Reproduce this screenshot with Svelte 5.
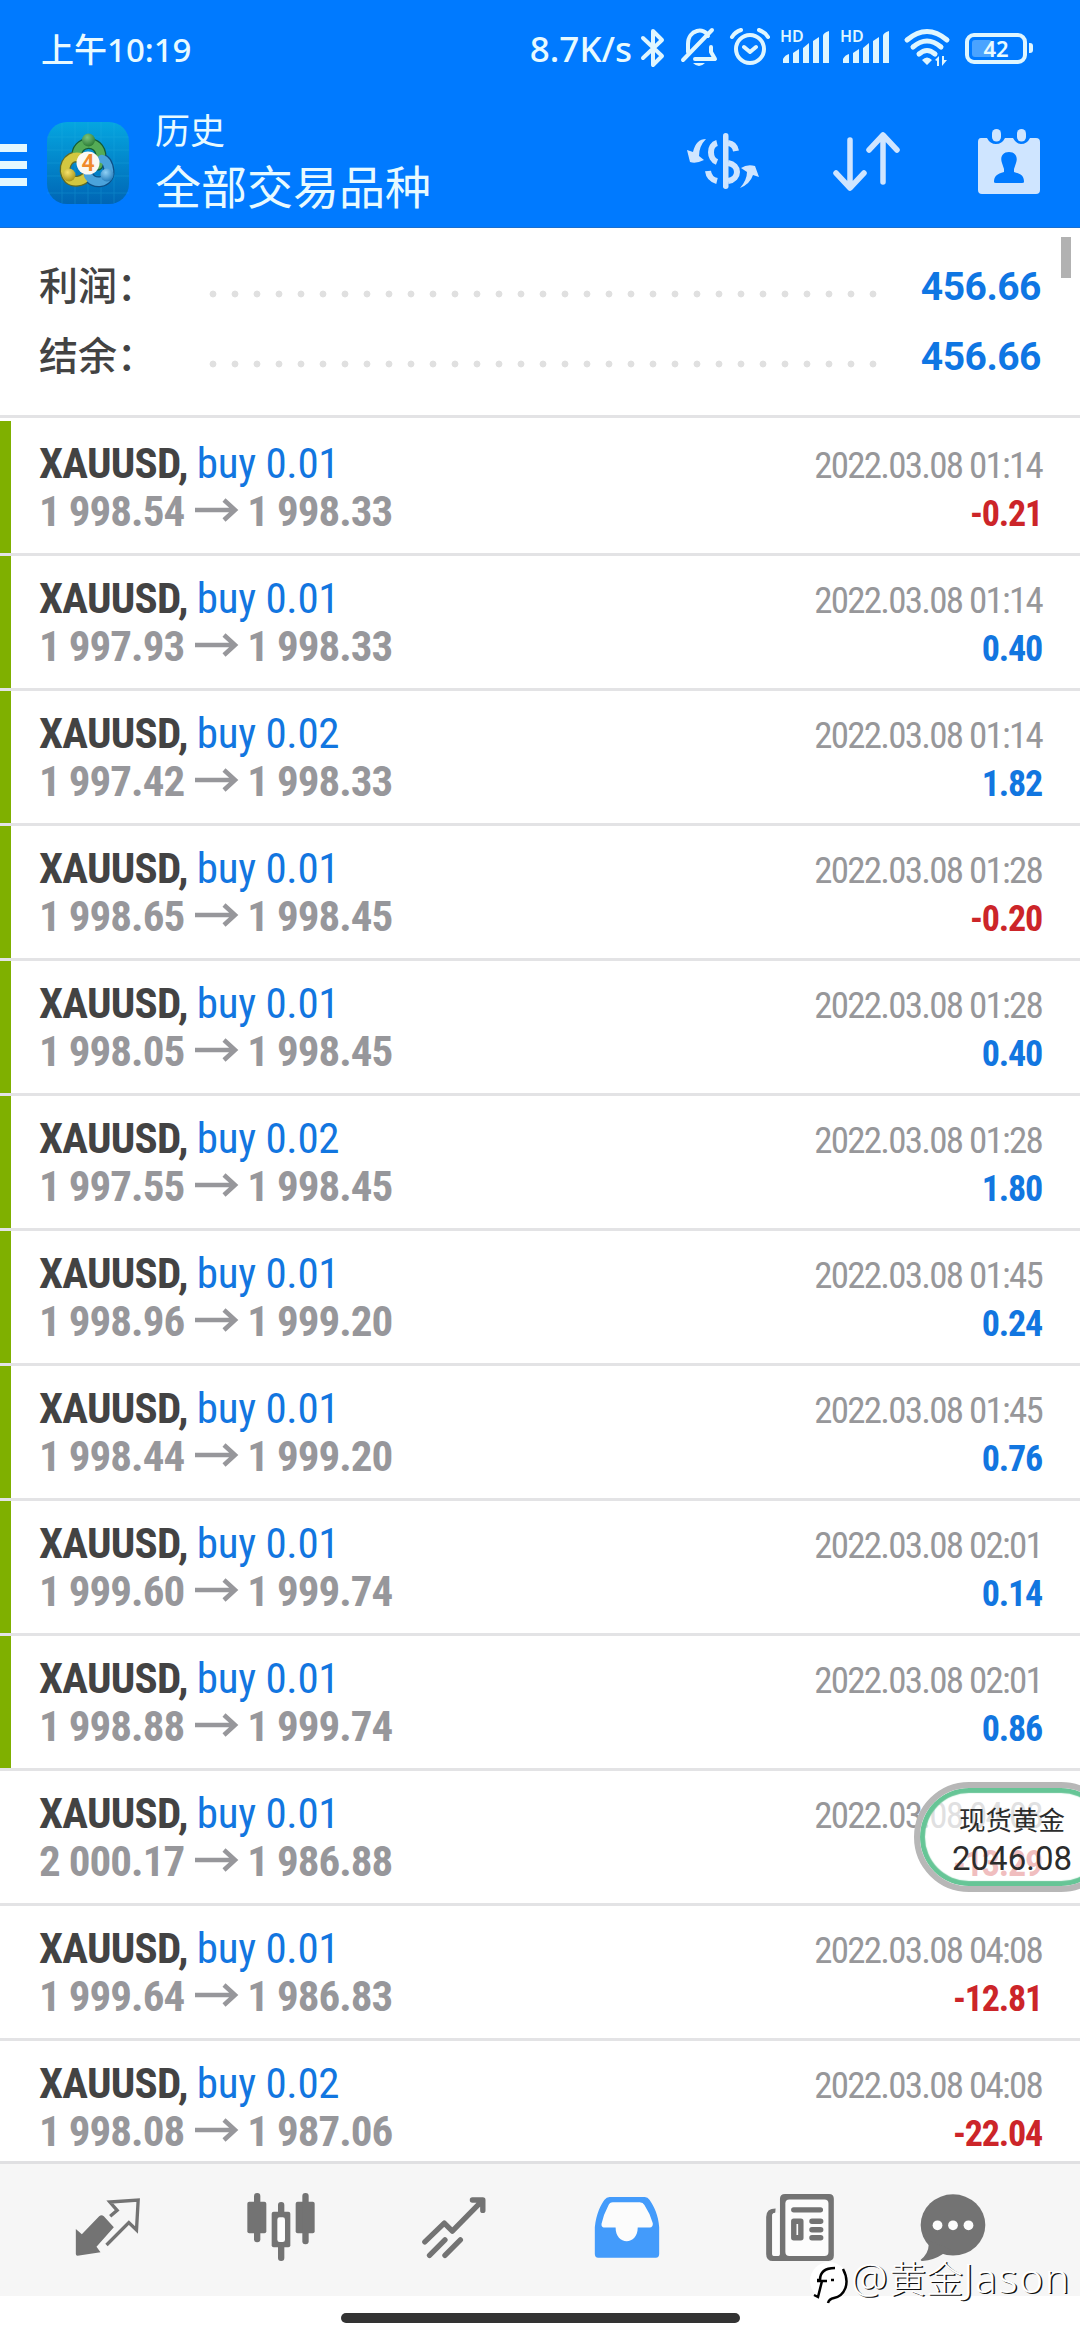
<script>
    const trades = [
        { lots: '0.01', open: '1 998.54', close: '1 998.33', time: '2022.03.08 01:14', profit: '-0.21', marked: true },
        { lots: '0.01', open: '1 997.93', close: '1 998.33', time: '2022.03.08 01:14', profit: '0.40', marked: true },
        { lots: '0.02', open: '1 997.42', close: '1 998.33', time: '2022.03.08 01:14', profit: '1.82', marked: true },
        { lots: '0.01', open: '1 998.65', close: '1 998.45', time: '2022.03.08 01:28', profit: '-0.20', marked: true },
        { lots: '0.01', open: '1 998.05', close: '1 998.45', time: '2022.03.08 01:28', profit: '0.40', marked: true },
        { lots: '0.02', open: '1 997.55', close: '1 998.45', time: '2022.03.08 01:28', profit: '1.80', marked: true },
        { lots: '0.01', open: '1 998.96', close: '1 999.20', time: '2022.03.08 01:45', profit: '0.24', marked: true },
        { lots: '0.01', open: '1 998.44', close: '1 999.20', time: '2022.03.08 01:45', profit: '0.76', marked: true },
        { lots: '0.01', open: '1 999.60', close: '1 999.74', time: '2022.03.08 02:01', profit: '0.14', marked: true },
        { lots: '0.01', open: '1 998.88', close: '1 999.74', time: '2022.03.08 02:01', profit: '0.86', marked: true },
        { lots: '0.01', open: '2 000.17', close: '1 986.88', time: '2022.03.08 04:08', profit: '-13.29', marked: false },
        { lots: '0.01', open: '1 999.64', close: '1 986.83', time: '2022.03.08 04:08', profit: '-12.81', marked: false },
        { lots: '0.02', open: '1 998.08', close: '1 987.06', time: '2022.03.08 04:08', profit: '-22.04', marked: false }
    ]

    const summary = [
        { label: '利润：', value: '456.66' },
        { label: '结余：', value: '456.66' }
    ]
</script>

<div class="screen" lang="zh-CN">
    <header>
        <div class="status">
            <span class="clock">上午10:19</span>
            <span class="speed">8.7K/s</span>
            <svg class="bt" width="26" height="40" viewBox="0 0 26 40">
                <path d="M3 10 L22 28 L13 37 V3 L22 12 L3 30" />
            </svg>
            <svg class="bell" width="36" height="40" viewBox="0 0 36 40">
                <path d="M7 24 V16 C7 1 24 -1 27 8 M30 19 V24 L34 31 H14 M2 32 L31 2" />
                <path class="solid" d="M12 35 H24 Q18 41 12 35Z" />
            </svg>
            <svg class="alarm" width="40" height="40" viewBox="0 0 40 40">
                <circle cx="20" cy="21" r="14" />
                <path d="M14 19 L20 24 L26 19 M2 9 Q5 4 11 2 M29 2 Q35 4 38 9" />
            </svg>
            {#each [0, 1] as sim}
                <svg class="signal" class:second={sim === 1} width="52" height="40" viewBox="0 0 52 40">
                    <text x="0" y="14">HD</text>
                    <path class="solid" d="M3 35 V31 Q5 27 9 26 V35Z M13 35 V25 L19 21 V35Z M23 35 V20 L29 15 V35Z M33 35 V13 L39 9 V35Z M43 35 V8 Q43 5 49 3 V35Z" />
                </svg>
            {/each}
            <svg class="wifi" width="48" height="40" viewBox="0 0 48 40">
                <path d="M3 12 Q23 -5 43 12 M9 19 Q23 7 37 19 M15 26 Q23 19 31 26" />
                <path class="solid" d="M18 32 Q23 27 28 32 L23 37Z M31 32 L35 28 V38 H33 V33Z M38 28 H40 V32 H43 L38 38Z" />
            </svg>
            <div class="battery">
                <span class="level"></span>
                <b>42</b>
            </div>
            <i class="nub"></i>
        </div>
        <div class="toolbar">
            <div class="menu"><i></i><i></i><i></i></div>
            <svg class="logo" width="84" height="84" viewBox="0 0 84 84">
                <defs>
                    <linearGradient id="sky" x1="0" y1="0" x2="0" y2="1">
                        <stop offset="0" stop-color="#05a6e0" />
                        <stop offset="1" stop-color="#0065b4" />
                    </linearGradient>
                    <radialGradient id="green" cx=".4" cy=".3" r=".8">
                        <stop offset="0" stop-color="#7cc47e" />
                        <stop offset="1" stop-color="#21722c" />
                    </radialGradient>
                    <radialGradient id="gold" cx=".4" cy=".3" r=".8">
                        <stop offset="0" stop-color="#f7e36b" />
                        <stop offset="1" stop-color="#9d8a10" />
                    </radialGradient>
                    <radialGradient id="blue" cx=".4" cy=".3" r=".8">
                        <stop offset="0" stop-color="#8fd0f5" />
                        <stop offset="1" stop-color="#1873b5" />
                    </radialGradient>
                </defs>
                <rect x="1" y="1" width="82" height="82" rx="20" fill="url(#sky)" />
                <path d="M16 2 V82 M29 1 V83 M42 1 V83 M55 1 V83 M68 2 V82 M1 16 H83 M1 29 H83 M1 42 H83 M1 55 H83 M1 72 H83" stroke="#27b5e6" stroke-width="1" opacity=".25" />
                <g fill="none" stroke-linecap="round">
                    <path d="M31 36 C29 19 55 17 55 36 L52 44" stroke="#145c35" stroke-width="11" />
                    <path d="M33 36 C22 34 14 48 23 58 C28 62 36 60 39 57" stroke="#5d6a2a" stroke-width="11" />
                    <path d="M42 54 C47 65 64 62 63 50 C62 42 60 39 56 38" stroke="#0d4f86" stroke-width="11" />
                    <path d="M31 36 C29 19 55 17 55 36 L52 44" stroke="#55ab56" stroke-width="8.500" />
                    <path d="M33 36 C22 34 14 48 23 58 C28 62 36 60 39 57" stroke="#d3c740" stroke-width="8.500" />
                    <path d="M42 54 C47 65 64 62 63 50 C62 42 60 39 56 38" stroke="#4ba3db" stroke-width="8.500" />
                </g>
                <circle cx="42.500" cy="19" r="6.500" fill="url(#green)" />
                <circle cx="23" cy="54" r="6.500" fill="url(#gold)" />
                <circle cx="61" cy="54" r="6.500" fill="url(#blue)" />
                <circle cx="42" cy="42" r="11.500" fill="#fbf8f2" />
                <text x="42" y="50" text-anchor="middle">4</text>
            </svg>
            <div class="titles">
                <span>历史</span>
                <strong>全部交易品种</strong>
            </div>
            <svg class="currency" width="72" height="57" viewBox="0 0 72 57">
                <path d="M30 10 C22 12 22 26 30 29 M21 38 Q22 46 30 48 M41 10 Q48 11 49 18 M41 30 C53 32 53 46 41 48" />
                <rect x="36" y="0" width="5.500" height="56" rx="2.700" />
                <path class="solid" d="M19 6 Q9 6 6 19 L0 17 L3 29 Q9 31 17 27 L12 23 Q12 13 19 6Z M53 55 Q63 51 66 42 L72 44 L68 33 Q60 31 54 35 L60 39 Q60 47 53 55Z" />
            </svg>
            <svg class="sort" width="68" height="59" viewBox="0 0 68 59">
                <path d="M17 8 V55 M3 41 L17 56 L31 41 M50 50 V4 M36 18 L50 3 L64 18" />
            </svg>
            <svg class="calendar" width="64" height="66" viewBox="0 0 64 66">
                <path fill-rule="evenodd" d="M4 9 H10 Q13 15 19 15 Q25 15 28 9 H36 Q39 15 44 15 Q50 15 53 9 H59 Q63 9 63 13 V61 Q63 65 59 65 H5 Q1 65 1 61 V13 Q1 9 4 9Z M32 23 C25 23 23 29 25 34 L27 40 V43 C20 45 17 47 17 53 Q17 54 19 54 H45 Q47 54 47 53 C47 47 44 45 37 43 V40 L39 34 C41 29 39 23 32 23Z" />
                <rect x="15" y="0" width="9" height="12.500" rx="4.500" />
                <rect x="40" y="0" width="9" height="12.500" rx="4.500" />
            </svg>
        </div>
    </header>

    <main>
        <div class="summary">
            {#each summary as item}
                <div class="total">
                    <span>{item.label}</span>
                    <i></i>
                    <b>{item.value}</b>
                </div>
            {/each}
            <div class="scrollbar"></div>
        </div>

        <div class="trades">
            {#each trades as trade}
                <div class="trade" class:marked={trade.marked}>
                    <div class="line">
                        <span class="symbol">XAUUSD, <em>buy {trade.lots}</em></span>
                        <span class="time">{trade.time}</span>
                    </div>
                    <div class="line">
                        <span class="prices">
                            {trade.open}<svg width="43" height="24" viewBox="0 0 43 24"><path d="M0 12 H40 M29 2 L40 12 L29 22" /></svg>{trade.close}
                        </span>
                        <span class="profit" class:loss={trade.profit.startsWith('-')}>{trade.profit}</span>
                    </div>
                </div>
            {/each}
        </div>
    </main>

    <nav>
        <svg width="66" height="58" viewBox="0 0 193 174">
            <path d="M0 93 L18 109 L70 55 Q77 48 84 55 L114 88 L62 146 L74 163 L5 173 Q0 173 0 168Z" />
            <path class="stroke thin" d="M103 55 L124 37 L102 12 L187 6 L182 96 L159 74 L92 141" />
        </svg>
        <svg width="70" height="68" viewBox="0 0 202 204">
            <rect x="0" y="26" width="57" height="95" rx="6" />
            <rect x="20" y="0" width="19" height="148" rx="9" />
            <rect x="92" y="27" width="19" height="177" rx="9" />
            <rect x="73" y="56" width="56" height="107" rx="6" />
            <rect class="paper" x="90" y="73" width="23" height="74" rx="7" />
            <rect x="145" y="26" width="57" height="95" rx="6" />
            <rect x="165" y="0" width="19" height="154" rx="9" />
        </svg>
        <svg width="66" height="61" viewBox="0 0 190 182">
            <path class="stroke" d="M8 134 L66 78 L90 102 L178 12 M150 9 H181 V40 M22 174 L68 128 M68 174 L114 128" />
        </svg>
        <svg class="active" width="66" height="61" viewBox="0 0 192 182">
            <path d="M0 90 C4 50 18 22 29 8 Q35 0 44 0 H149 Q158 0 163 8 C176 26 190 55 192 90 V170 Q192 181 182 181 H10 Q0 181 0 170Z" />
            <path class="paper" d="M54 16 H134 Q144 16 148 24 Q164 48 173 78 Q174 90 164 91 H128 C128 118 112 132 95 132 C78 132 62 118 62 91 H26 Q19 90 20 80 Q26 52 40 26 Q44 16 54 16Z" />
        </svg>
        <svg width="70" height="67" viewBox="0 0 201 199">
            <path d="M28 43 Q0 43 0 68 V178 Q0 199 20 199 H185 Q201 199 201 183 V14 Q201 0 187 0 H56 Q41 0 41 14 V178 Q41 184 36 184 H24 Q18 184 18 178 V62 Q18 57 27 56Z" />
            <rect class="paper" x="57" y="16" width="128" height="168" rx="12" />
            <path class="paper" d="M18 66 Q18 57 27 56 H34 Q38 56 38 64 V172 Q41 184 34 184 H24 Q18 184 18 178Z" />
            <path class="stroke" d="M82 47 H161 M136 81 H162 M136 106 H162 M136 130 H162 M82 81 H103 V130 H82Z" />
        </svg>
        <svg class="chat" width="66" height="67" viewBox="0 0 192 199">
            <ellipse cx="96" cy="92" rx="96" ry="91" />
            <path d="M12 132 L24 150 Q23 178 0 195 Q0 199 5 199 Q40 196 66 178 L100 170Z" />
            <circle class="paper" cx="50" cy="93" r="14.500" />
            <circle class="paper" cx="96" cy="93" r="14.500" />
            <circle class="paper" cx="142" cy="93" r="14.500" />
        </svg>
    </nav>
    <div class="gesture"><i></i></div>

    <div class="ticker">
        <span>现货黄金</span>
        <b>2046.08</b>
    </div>

    <div class="author">
        <svg width="42" height="46" viewBox="0 0 42 46">
            <circle cx="20" cy="21" r="19" />
            <path d="M8 20 H11 C11 12 16 8 26 8 M8 21 H18 M13 21 L9 37 L5 35" />
            <path d="M34 9 C42 24 35 36 25 38 Q20 39 19 43" />
            <path d="M22 20 H25" />
        </svg>
        <span>@<small>黄金</small>Jason</span>
    </div>
</div>

<style>
    :global(body) {
        background: #fff;
    }
    .screen {
        position: relative;
        display: flex;
        flex-direction: column;
        width: 1080px;
        height: 2340px;
        overflow: hidden;
        background: #fff;
        font-family: Roboto, 'Noto Sans CJK SC', sans-serif;
    }
    svg {
        display: block;
        flex: none;
        overflow: visible;
    }

    header {
        flex: none;
        height: 227px;
        background: #007aff;
        border-bottom: 1px solid #1a6fd0;
        color: #e8faff;
    }
    .status {
        display: flex;
        align-items: center;
        height: 96px;
        padding: 0 47px 0 41px;
        font-family: 'Noto Sans', 'Noto Sans CJK SC', sans-serif;
        font-weight: 500;
    }
    .status svg {
        fill: none;
        stroke: #dff6ff;
        stroke-width: 4;
        stroke-linecap: round;
        stroke-linejoin: round;
    }
    .status svg .solid {
        fill: #dff6ff;
        stroke: none;
    }
    .clock {
        flex: 1;
        font-size: 33px;
    }
    .speed {
        font-size: 35px;
    }
    .bt {
        margin-left: 8px;
    }
    .bell {
        margin-left: 15px;
    }
    .alarm {
        margin-left: 13px;
    }
    .signal {
        margin-left: 10px;
    }
    .signal.second {
        margin-left: 8px;
    }
    .signal text {
        fill: #dff6ff;
        stroke: none;
        font: 600 16px 'Noto Sans', sans-serif;
    }
    .wifi {
        margin-left: 12px;
    }
    .status .wifi {
        stroke-width: 5;
    }
    .battery {
        display: flex;
        align-items: center;
        justify-content: center;
        position: relative;
        box-sizing: border-box;
        width: 62px;
        height: 31px;
        margin-left: 13px;
        border: 4px solid #dff6ff;
        border-radius: 9px;
        font-size: 22px;
    }
    .battery b {
        position: relative;
        font-weight: 600;
    }
    .level {
        position: absolute;
        left: 3px;
        top: 3px;
        bottom: 3px;
        width: 20px;
        border-radius: 3px;
        background: #4aa3ff;
    }
    .nub {
        width: 4px;
        height: 10px;
        margin-left: 2px;
        border-radius: 0 3px 3px 0;
        background: #dff6ff;
    }

    .toolbar {
        display: flex;
        align-items: center;
        height: 131px;
        padding-right: 39px;
    }
    .menu {
        display: flex;
        flex-direction: column;
        gap: 9px;
        width: 27px;
        margin-top: 6px;
    }
    .menu i {
        height: 8px;
        background: #e4f8ff;
    }
    .logo {
        margin: 3px 0 0 19px;
    }
    .logo text {
        fill: #f08a2c;
        font: 600 23px Roboto, sans-serif;
    }
    .titles {
        display: flex;
        flex: 1;
        flex-direction: column;
        margin: 3px 0 0 25px;
    }
    .titles span {
        font-size: 35px;
        line-height: 50px;
    }
    .titles strong {
        font-size: 46px;
        font-weight: 400;
        line-height: 61px;
    }
    .currency,
    .sort,
    .calendar {
        fill: #cfe5ff;
    }
    .currency path,
    .sort path {
        fill: none;
        stroke: #cfe5ff;
        stroke-width: 6;
    }
    .currency .solid {
        fill: #cfe5ff;
        stroke: none;
    }
    .sort {
        margin-left: 74px;
    }
    .sort path {
        stroke-linecap: round;
        stroke-linejoin: round;
        stroke-width: 5.5;
    }
    .calendar {
        margin-left: 76px;
    }

    main {
        flex: 1;
        min-height: 0;
        overflow: hidden;
    }
    .summary {
        position: relative;
        box-sizing: border-box;
        height: 190px;
        padding: 24px 39px 0;
        border-bottom: 3px solid #e3e3e5;
    }
    .total {
        display: flex;
        align-items: center;
        height: 70px;
    }
    .total span {
        width: 170px;
        margin-top: -8px;
        color: #434343;
        font-family: 'Noto Sans CJK SC', sans-serif;
        font-size: 39px;
        font-weight: 500;
    }
    .total i {
        width: 674px;
        height: 8px;
        margin-top: 14px;
        background: radial-gradient(circle at 4px 4px, #e0e0e0 3px, transparent 3.8px) 0 0 / 22px 8px;
    }
    .total b {
        flex: 1;
        color: #0f76e3;
        font-size: 39px;
        letter-spacing: -0.5px;
        text-align: right;
    }
    .scrollbar {
        position: absolute;
        top: 9px;
        right: 9px;
        width: 10px;
        height: 41px;
        background: #b2b2b2;
    }

    .trades {
        padding-top: 3px;
    }
    .trade {
        position: relative;
        box-sizing: border-box;
        height: 135px;
        padding: 18px 38px 0 39px;
        border-bottom: 3px solid #e3e3e5;
        font-family: 'Roboto Condensed', Roboto, sans-serif;
    }
    .trade.marked::before {
        content: '';
        position: absolute;
        left: 0;
        top: 0;
        width: 11px;
        height: 132px;
        background: #7fb000;
    }
    .line {
        display: flex;
        align-items: baseline;
        justify-content: space-between;
        height: 48px;
        line-height: 48px;
    }
    .symbol {
        color: #434343;
        font-size: 43px;
        font-weight: 700;
        letter-spacing: -0.75px;
    }
    .symbol em {
        color: #1276e0;
        font-style: normal;
        font-weight: 400;
        letter-spacing: -0.3px;
    }
    .time {
        color: #97979a;
        font-size: 37px;
        font-weight: 400;
        letter-spacing: -1.75px;
    }
    .prices {
        color: #97979b;
        font-size: 43px;
        font-weight: 700;
        letter-spacing: -0.95px;
    }
    .prices svg {
        display: inline-block;
        margin: 0 9px 0 11px;
        vertical-align: 4px;
        fill: none;
        stroke: #97979b;
        stroke-width: 4.5;
    }
    .profit {
        color: #1276e0;
        font-size: 36px;
        font-weight: 700;
        letter-spacing: -1.2px;
    }
    .profit.loss {
        color: #cc2529;
    }

    nav {
        display: grid;
        grid-template-columns: repeat(6, 173px);
        flex: none;
        place-items: center;
        box-sizing: border-box;
        height: 135px;
        padding: 0 0 6px 21px;
        border-top: 3px solid #e0e0e2;
        background: #f6f6f6;
    }
    nav svg {
        fill: #737373;
    }
    nav .active {
        fill: #439bfb;
    }
    nav .chat {
        margin-right: 40px;
    }
    nav .paper {
        fill: #fcfcfc;
    }
    nav .stroke {
        fill: none;
        stroke: #737373;
        stroke-width: 16;
        stroke-linecap: round;
        stroke-linejoin: round;
    }
    nav .thin {
        stroke-width: 10;
        stroke-linecap: butt;
        stroke-linejoin: miter;
    }
    .gesture {
        flex: none;
        height: 44px;
    }
    .gesture i {
        display: block;
        width: 399px;
        height: 10px;
        margin: 17px auto 0;
        border-radius: 5px;
        background: #333;
    }

    .ticker {
        position: absolute;
        left: 914px;
        top: 1782px;
        display: flex;
        flex-direction: column;
        align-items: center;
        box-sizing: border-box;
        width: 202px;
        height: 110px;
        padding: 13px 6px 0 0;
        border: 6px solid #b7b7b7;
        border-radius: 55px;
        background: rgba(255, 255, 255, 0.7);
        box-shadow: inset 0 0 1px 5px #66c596;
        color: #2c2c2c;
    }
    .ticker span {
        font-size: 26.5px;
        line-height: 40px;
    }
    .ticker b {
        font-size: 33px;
        font-weight: 400;
        line-height: 36px;
    }

    .author {
        position: absolute;
        left: 809px;
        top: 2254px;
        display: flex;
        align-items: center;
        color: #fff;
        font: 300 41px/46px 'Noto Sans', 'Noto Sans CJK SC', sans-serif;
        letter-spacing: 1.5px;
        text-shadow: 1.5px 1px 0 #111;
        white-space: nowrap;
    }
    .author span {
        margin-top: -4px;
    }
    .author small {
        font-size: 37px;
        letter-spacing: 0;
    }
    .author svg {
        margin-top: 6px;
        fill: none;
        stroke: #000;
        stroke-width: 2.5;
    }
    .author circle {
        fill: #fff;
        stroke: none;
    }
</style>
